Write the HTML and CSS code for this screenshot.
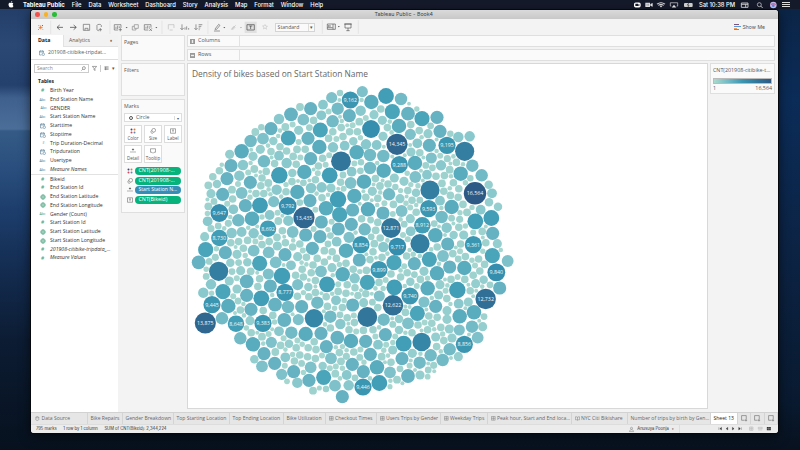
FILE: index.html
```
<!DOCTYPE html>
<html lang="en">
<head>
<meta charset="utf-8">
<title>Tableau Public - Book4</title>
<link rel="stylesheet" href="styles.css">
</head>
<body>
<svg class="defs" width="0" height="0">
  <defs>
    <symbol id="sheet" viewBox="0 0 12 12"><path d="M1 1h8v6M1 1v8h5M8.500 7v4M6.500 9h4"/></symbol>
    <symbol id="grid" viewBox="0 0 12 12"><path d="M1 1h9v9H1zM5.500 1v9M1 5.500h9"/></symbol>
    <symbol id="book" viewBox="0 0 12 12"><path d="M1 2h3l2 1 2-1h3v7H8l-2 1-2-1H1zM6 3v7"/></symbol>
    <symbol id="cyl" viewBox="0 0 12 12"><path d="M2 3c0-2 7-2 7 0v6c0 2-7 2-7 0zM2 3c0 1.600 7 1.600 7 0"/></symbol>
    <symbol id="cal" viewBox="0 0 12 12"><path d="M1 2h8v3M1 2v8h4M1 4h8M3 1v2M7 1v2"/><circle cx="8.500" cy="8.500" r="2.500"/></symbol>
    <symbol id="globe" viewBox="0 0 12 12"><circle cx="6" cy="6" r="4.500"/><path d="M1.500 6h9M6 1.500c-3 3-3 6 0 9c3-3 3-6 0-9"/></symbol>
    <symbol id="dots" viewBox="0 0 12 12"><g stroke="none"><circle cx="3" cy="3" r="2" fill="#48427a"/><circle cx="9" cy="3" r="2" fill="#e8762c"/><circle cx="3" cy="9" r="2" fill="#d6455a"/><circle cx="9" cy="9" r="2" fill="#5b89b4"/></g></symbol>
    <symbol id="size" viewBox="0 0 12 12"><circle cx="7.500" cy="4.500" r="3.700"/><path d="M4 5a2.800 2.800 0 1 0 3 4"/></symbol>
    <symbol id="label" viewBox="0 0 12 12"><path d="M1 1.500h10v9H1zM4 4h4M6 4v4.500"/></symbol>
    <symbol id="detail" viewBox="0 0 12 12"><circle cx="6" cy="3" r="1.300" fill="#444"/><circle cx="2" cy="8" r=".6"/><circle cx="6" cy="8" r=".6"/><circle cx="10" cy="8" r=".6"/></symbol>
    <symbol id="tip" viewBox="0 0 12 12"><path d="M1 1.500h10v7H8l-2 2-2-2H1z"/></symbol>
  </defs>
</svg>
<header class="menubar">
  <svg class="apple" viewBox="0 0 12 14"><path d="M6 4C4 2.500 1 3.500 1 7s2.500 7 5 5.700C8.500 14 10 12 11 10 9 9 9 6 10.700 5 9.500 3.200 7.500 3.200 6 4zM6 3c0-1.800 1-2.800 2.500-3C8.500 1.800 7.500 2.900 6 3z"/></svg>
  <nav><b>Tableau Public</b><span>File</span><span>Data</span><span>Worksheet</span><span>Dashboard</span><span>Story</span><span>Analysis</span><span>Map</span><span>Format</span><span>Window</span><span>Help</span></nav>
  <div class="tray">
    <svg viewBox="0 0 180 16">
      <rect x="0" y="1" width="20" height="15" rx="5" fill="#fff"/><path d="M4 5h8v7H4zM12 8l4-2v6l-4-2" fill="#151a2b"/>
      <path d="M34 2h14v13H34zM49 6l7-3v11l-7-3z" fill="#ddd"/><path d="M39 5v6M43 5v6" stroke="#151a2b"/>
      <path d="M68 5q13-9 26 0l-2 2q-11-7-22 0zM72 9q9-6 18 0l-2 2q-7-5-14 0zM77 12q4-3 8 0l-4 4z" fill="#ddd"/>
      <path d="M112 12h-3V2h22v10h-3" stroke="#ddd" stroke-width="2" fill="none"/><path d="M113 16l7-8 7 8z" fill="#ddd"/>
      <rect x="150" y="3" width="26" height="12" rx="3" fill="#ccc"/><path d="M164 3l-4 6h5l-3 6" stroke="#222" stroke-width="2" fill="none"/>
    </svg>
    <b>Sat 10:38 PM</b>
    <svg class="tray-end" viewBox="0 0 126 18">
      <path d="M1 3h20v13H1zM1 7h20M14 7v9" stroke="#ddd" stroke-width="2.500" fill="none"/>
      <circle cx="55" cy="8" r="6" stroke="#ddd" stroke-width="2" fill="none"/><path d="M59 12l6 6" stroke="#ddd" stroke-width="2.500"/>
      <circle cx="97" cy="9" r="10" fill="#c5b6e7"/><path d="M90 8q7-6 14 0" stroke="#ef5c86" stroke-width="4" fill="none"/><circle cx="97" cy="11" r="4" fill="#4c8be0"/>
    </svg>
    <i class="list"></i>
  </div>
</header>

<main class="window">
  <div class="titlebar"><i class="red"></i><i class="amber"></i><i class="green"></i><span>Tableau Public - Book4</span></div>
  <div class="toolbar">
    <svg viewBox="0 0 340 50">
      <g fill="none" stroke="#666" stroke-width="2">
        <path d="M59 5v40M69 0M394 5" stroke="#dcdcdc"/><path d="M237 5v40" stroke="#dcdcdc"/>
        <g stroke-width="2.500"><path d="M29 19v12M23 25h12" stroke="#e8762c"/><path d="M22 18l3 3M33 29l3 3" stroke="#7099a5"/><path d="M36 18l-3 3M25 29l-3 3" stroke="#c72035"/></g>
        <path d="M96 25H79M86 18l-8 7 8 7M117 25h18M128 18l8 7-8 7" stroke="#333"/>
        <path d="M157 16h19v18h-19zM162 34v-6h9v6M198 19c0-4 13-4 13 0v5M198 19v13c0 2 4 3 6 3M208 27v10M203 32h10"/>
        <path d="M250 17h20v10M250 17v16h11M255 30v-7M260 30V20M265 27v-5M268 27v10M263 32h10"/>
        <path d="M310 17h12v11h-12zM304 22h6M304 22v11h11v-5" stroke="#888"/>
      </g>
      <path d="M284 24h6l-3 4z" fill="#555"/>
    </svg>
    <svg viewBox="340 0 340 50">
      <g fill="none" stroke="#666" stroke-width="2">
        <path d="M394 5v40M532 5v40" stroke="#dcdcdc"/>
        <path d="M341 17h20v9M341 17v16h12M346 29v-6M351 29V20M356 26v-4M356 28l8 8M364 28l-8 8"/>
        <path d="M413 31v-14h17v10M417 33h9" stroke="#bbb"/>
        <path d="M454 16v16M449 27l5 5 5-5M463 32v-7M468 32v-10M474 32v-5" />
        <path d="M496 16v16M491 27l5 5 5-5M504 17h11M504 22h8M504 27h5M504 32h3"/>
        <path d="M554 29l10-13 4 3-10 12h-5zM550 36h18"/>
        <path d="M602 32l13-13M605 33l9-9M603 29l8-8" stroke="#bbb"/>
        <rect x="642" y="8" width="36" height="34" fill="#e0e0e0" stroke="none"/><path d="M649 17h22v16h-22zM656 21h9M660 21v9" stroke="#444"/>
      </g>
      <path d="M374 24h6l-3 4zM578 24h6l-3 4z" fill="#555"/><path d="M628 24h6l-3 4z" fill="#aaa"/>
    </svg>
    <svg class="pin" viewBox="0 0 12 12"><path d="M6 1l1.500 3 3.500.5-3 2 1 4-3-2.500L3 10l1-4-3-2 3.500-.5z" fill="none" stroke="#bbb"/></svg>
    <div class="select">Standard<i>▾</i></div>
    <svg class="show" viewBox="0 0 90 30"><g fill="none" stroke="#555" stroke-width="2"><path d="M-14-5v40M94-5v40" stroke="#dcdcdc"/><path d="M1 6h24v16H1zM1 17h16M5 9v6M9 9v6M18 6v16M54 6h18v12H54zM63 18v8M58 26h10M51 6h24"/></g><path d="M33 13h5l-2.500 3z"/></svg>
    <div class="showme"><i></i><span>Show Me</span></div>
  </div>

  <div class="work">
    <aside class="data">
      <div class="datatabs"><b>Data</b><span>Analytics</span><i>♦</i></div>
      <div class="source"><svg><use href="#cal"/></svg><span>201908-citibike-tripdat...</span></div>
      <div class="searchrow"><div class="search"><span>Search</span><svg viewBox="0 0 12 12"><circle cx="7" cy="5" r="3.500"/><path d="M4.500 7.500L1 11"/></svg></div><svg viewBox="0 0 12 12"><path d="M1 1h10L7 6v5L5 9V6z"/></svg><em></em><svg viewBox="0 0 12 12"><path d="M1 2h10M1 5h10M1 8h10M4 2v8"/></svg><small>▾</small></div>
      <h2>Tables</h2>
      <ul id="fields"></ul>
    </aside>

    <section class="cards">
      <div class="card pages">Pages</div>
      <div class="card filters">Filters</div>
      <div class="card marks">Marks
        <div class="marktype"><i></i><span>Circle</span><small>▾</small></div>
        <div class="buttons">
          <div><svg><use href="#dots"/></svg>Color</div><div><svg><use href="#size"/></svg>Size</div><div><svg><use href="#label"/></svg>Label</div>
          <div><svg><use href="#detail"/></svg>Detail</div><div><svg><use href="#tip"/></svg>Tooltip</div>
        </div>
        <div class="pill"><svg><use href="#dots"/></svg><span>CNT(201908-...</span></div>
        <div class="pill"><svg><use href="#size"/></svg><span>CNT(201908-...</span></div>
        <div class="pill blue"><svg><use href="#detail"/></svg><span>Start Station N...</span></div>
        <div class="pill"><svg><use href="#label"/></svg><span>CNT(Bikeid)</span></div>
      </div>
    </section>

    <section class="sheet">
      <div class="shelf"><span><i class="cols"></i>Columns</span></div>
      <div class="shelf"><span><i class="rows"></i>Rows</span></div>
      <div class="canvas">
        <div class="view"><h1>Density of bikes based on Start Station Name</h1><svg id="chart" viewBox="188 82 519 326"></svg></div>
        <div class="legend"><span>CNT(201908-citibike-t...</span><div class="ramp"></div><p><span>1</span><span>16,564</span></p></div>
      </div>
    </section>
  </div>

  <div class="tabs">
    <span class="t0"><svg><use href="#cyl"/></svg>Data Source</span><span class="t1">Bike Repairs</span><span class="t2">Gender Breakdown</span><span class="t3">Top Starting Location</span><span class="t4">Top Ending Location</span><span class="t5">Bike Utilization</span><span class="t6"><svg><use href="#grid"/></svg>Checkout Times</span><span class="t7"><svg><use href="#grid"/></svg>Users Trips by Gender</span><span class="t8"><svg><use href="#grid"/></svg>Weekday Trips</span><span class="t9"><svg><use href="#grid"/></svg>Peak hour, Start and End loca...</span><span class="t10"><svg><use href="#book"/></svg>NYC Citi Bikishare</span><span class="t11">Number of trips by birth by Gen...</span><span class="t12">Sheet 13</span><span class="add"><svg><use href="#sheet"/></svg></span><span class="add"><svg><use href="#sheet"/></svg></span><span class="add"><svg><use href="#sheet"/></svg></span>
  </div>
  <footer class="status">
    <span>795 marks</span><span>1 row by 1 column</span><span>SUM of CNT(Bikeid): 2,344,224</span>
    <div class="user"><svg viewBox="0 0 12 12"><circle cx="6" cy="3" r="2.500"/><path d="M1 11c0-6 10-6 10 0z"/></svg><span>Anusuya Poonja</span><small>▾</small></div>
    <div class="pager"><svg viewBox="0 0 160 16"><path d="M1 4v8M9 4l-5 4 5 4zM28 4l-5 4 5 4zM42 4l5 4-5 4zM61 4l5 4-5 4zM69 4v8" fill="#333" stroke="#333"/><path d="M94 3h10v10H94zM99 3v10M94 8h10M120 4h12v4h-12zM120 12h12" fill="none" stroke="#bbb" stroke-width="2"/><path d="M146 3h12v10h-12z" fill="#333"/><path d="M152 3v10M146 8h12" stroke="#ccc"/></svg></div>
  </footer>
</main>
<script src="chart.js"></script>
</body>
</html>
```
FILE: styles.css
```
* { box-sizing: border-box; }
body {
  margin: 0; width: 800px; height: 450px; overflow: hidden;
  font: 5.4px/1 "Open Sans", "Noto Sans", sans-serif; color: #555;
  background:
    linear-gradient(#0b2445 0, #0b2c58 100px, #0c2344 250px, #091a30 400px, #08111e 450px) 100% 0 / 400px 450px no-repeat,
    linear-gradient(#213c66 0, #2b4875 45px, #24406c 85px, #3f608d 98px, #4b6e99 129px, #345a85 131px, #2b507f 165px, #1d3e6c 210px, #142d52 265px, #0c1c33 340px, #07111e 450px);
}
svg { display: block; flex: none; overflow: visible; }
.defs { position: absolute; }
i, em { font-style: normal; }
.menubar {
  height: 9px; display: flex; align-items: center; background: #151a2b; color: #fff;
  font: 500 5.850px/9px Inter, sans-serif; white-space: nowrap;
}
.apple { width: 6px; height: 7px; margin-left: 8px; fill: #fff; }
.menubar nav { display: flex; gap: 6.900px; margin-left: 9px; }
.menubar b { font-weight: 700; }
.tray { margin-left: auto; display: flex; align-items: center; width: 166px; }
.tray svg { width: 60px; height: 5.500px; margin-right: 5px; }
.tray b { font-weight: 500; width: 37px; margin-right: 5px; letter-spacing: -.05px; }
.tray .tray-end { width: 42px; margin-right: -1px; height: 6px; }
.list { width: 8px; height: 5px; border: solid #ddd; border-width: 1px 0; background: linear-gradient(#ddd, #ddd) 0 50% / 8px 1px no-repeat; }
.window {
  margin: 1px 0 0 31px; width: 747px; height: 423px; display: flex; flex-direction: column;
  background: #f3f3f3; border-radius: 3px; overflow: hidden; box-shadow: 0 0 0 1px #05080d, 0 3px 12px #000a;
}
.titlebar { flex: none; height: 9px; background: linear-gradient(#dadada, #c8c8c8); display: flex; align-items: center; gap: 4px; padding-left: 4px; }
.titlebar i { width: 4.500px; height: 4.500px; border-radius: 50%; background: #f4514d; }
.titlebar .amber { background: #f8b025; }
.titlebar .green { background: #2abb38; }
.titlebar span { margin-left: 314px; font: 5.350px/9px Inter, sans-serif; color: #444; white-space: nowrap; }
.toolbar { flex: none; height: 16px; display: flex; align-items: center; }
.toolbar > svg { width: 113.300px; height: 16.700px; }
.toolbar > .pin { width: 6px; height: 6px; margin-left: 4px; }
.select { width: 40px; height: 9px; margin-left: 7px; border: 1px solid #d4d4d4; background: #fafafa; padding-left: 2px; display: flex; justify-content: space-between; line-height: 7px; font-size: 5.100px; }
.select i { width: 6px; border-left: 1px solid #ddd; text-align: center; }
.toolbar > .show { width: 30px; height: 10px; margin-left: 12px; }
.showme { margin-left: auto; margin-right: 13px; display: flex; align-items: center; gap: 2px; font: 5.100px Inter, sans-serif; }
.showme i { width: 7px; height: 6px; background:
  linear-gradient(#775480, #775480) 0 0 / 5px 1px no-repeat,
  linear-gradient(#5b9bd5, #5b9bd5) 0 2px / 7px 1px no-repeat,
  linear-gradient(#f59b55, #f59b55) 0 4px / 3px 1px no-repeat,
  linear-gradient(#e56262, #e56262) 0 5px / 5px 1px no-repeat; }
.work { flex: none; height: 377px; display: flex; }
.data { width: 87px; background: #fff; }
.datatabs { display: flex; height: 12px; line-height: 11px; }
.datatabs b { width: 32px; padding-left: 7px; color: #222; font-size: 5.200px; }
.datatabs span { flex: 1; padding-left: 5px; background: #f2f2f2; border: solid #e2e2e2; border-width: 0 0 1px 1px; font-size: 5.100px; }
.datatabs i { width: 8px; background: #f2f2f2; border-bottom: 1px solid #e2e2e2; font-size: 4px; }
.source { height: 13px; display: flex; align-items: center; gap: 3px; padding-left: 8px; border-bottom: 1px solid #ddd; font-size: 5.150px; white-space: nowrap; }
.source svg, .data li svg { width: 6px; height: 6px; fill: none; stroke: #587f98; stroke-width: 1.200; }
.searchrow { display: flex; align-items: center; gap: 3px; padding: 4px 0 0 3px; }
.search { width: 55px; height: 9px; border: 1px solid #ccc; display: flex; align-items: center; justify-content: space-between; padding: 0 2px; color: #888; font-size: 5px; }
.searchrow svg { width: 5px; height: 5px; fill: none; stroke: #555; stroke-width: 1.300; }
.searchrow em { width: 1px; height: 7px; background: #ccc; }
h2 { margin: 5px 0 2.300px 7px; font-size: 5px; line-height: 6px; color: #222; }
.data ul { list-style: none; margin: 0; padding: 0; }
.data li { height: 8.770px; display: flex; align-items: center; gap: 4px; padding-left: 8px; color: #333; font-size: 5.150px; white-space: nowrap; }
.data li b { width: 9px; margin-left: -1px; margin-right: -1px; text-align: center; font-size: 3.600px; font-weight: 400; color: #407f9e; }
.data li svg { margin-right: .5px; margin-left: .5px; }
.data li.g svg { stroke: #3b9c75; }
.data li.g b, .data li.g b.hash { color: #3b9c75; }
.data .hash { font-size: 5px; }
.data .measure { border-top: 1px solid #e2e2e2; height: 9.600px; }
.data em { font-style: italic; }
.cards { width: 66px; padding: 0 0 0 3px; }
.card { width: 64px; border: 1px solid #dfdfdf; background: #fafafa; padding: 4px 2px 0; font-size: 5.200px; }
.pages { height: 26px; }
.filters { height: 33px; margin-top: 2px; padding-top: 4px; }
.marks { height: 114px; margin-top: 3px; }
.marktype { height: 9px; margin-top: 4px; border: 1px solid #ddd; background: #fff; display: flex; align-items: center; gap: 3px; padding-left: 4px; }
.marktype i { width: 4px; height: 4px; border: .5px solid #555; border-radius: 50%; }
.marktype small { margin-left: auto; border-left: 1px solid #ddd; width: 7px; text-align: center; }
.buttons { display: grid; grid-template-columns: repeat(3, 18px); grid-auto-rows: 18px; gap: 2px; margin: 3px 0 4px; }
.buttons div { border: 1px solid #ddd; background: #fff; display: flex; flex-direction: column; align-items: center; gap: 1.500px; padding-top: 2px; font-size: 4.500px; }
.buttons svg, .pill svg { width: 6px; height: 6px; fill: none; stroke: #555; }
.pill { display: flex; align-items: center; gap: 2px; height: 8px; margin: 0 0 1.600px 3px; }
.pill span { width: 46px; height: 8px; border-radius: 4px; background: #07b37b; color: #fff; padding-left: 3.500px; line-height: 7.500px; font-size: 5.350px; white-space: nowrap; }
.pill.blue span { background: #368eb6; font-size: 5.100px; }
.sheet { width: 594px; padding: 0 3px; }
.shelf { height: 12px; margin-bottom: 2px; border: 1px solid #dfdfdf; background: #fafafa; width: 588px; }
.shelf span { display: flex; align-items: center; gap: 3px; width: 52px; height: 10px; padding-left: 2px; border-right: 1px solid #e2e2e2; }
.shelf i { width: 5px; height: 5px; border: 1px solid #999; background: repeating-linear-gradient(90deg, #aaa 0 1px, #eee 0 2px); }
.shelf i.rows { background: repeating-linear-gradient(#aaa 0 1px, #eee 0 2px); }
.canvas { display: flex; gap: 2px; align-items: flex-start; }
.view { width: 521px; height: 346px; background: #fff; border: 1px solid #d8d8d8; }
h1 { margin: 0; padding: 0 0 0 4px; height: 18px; line-height: 20px; font-weight: 400; font-size: 8.400px; color: #666; white-space: nowrap; }
#chart { width: 519px; height: 326px; }
#chart text { fill: #eef6f8; font-size: 5.300px; text-anchor: middle; }
.legend { width: 65px; height: 31px; border: 1px solid #dfdfdf; background: #fafafa; padding: 4px 2px; white-space: nowrap; font-size: 5.350px; overflow: hidden; }
.ramp { height: 6px; margin-top: 5px; background: linear-gradient(90deg, #a9dacd, #72bac6, #3b96b2, #32779b, #2c5985); border: .5px solid #bbb; }
.legend p { margin: 2px 0 0; display: flex; justify-content: space-between; }
.tabs { flex: none; height: 12px; display: flex; background: #e6e6e6; border-top: 1px solid #d2d2d2; font-size: 5.050px; line-height: 11px; white-space: nowrap; color: #666; }
.tabs span { display: flex; align-items: center; gap: 1.500px; padding-left: 2.500px; border-right: 1px solid #d4d4d4; flex: none; }
.tabs svg { width: 5px; height: 5px; fill: none; stroke: #666; }
.tabs .t0 { width: 57px; padding-left: 4px; } .t1 { width: 35px; } .t2 { width: 51px; } .t3 { width: 56px; } .t4 { width: 54px; } .t5 { width: 42px; } .t6 { width: 51px; } .t7 { width: 64px; } .t8 { width: 47px; } .t9 { width: 84px; } .t10 { width: 56px; } .t11 { width: 83px; }
.tabs .t12 { width: 27px; background: #fff; color: #222; }
.tabs .add { width: 13.300px; padding-left: 3px; }
.tabs .add svg { width: 7px; height: 7px; }
.status { flex: none; height: 9px; display: flex; align-items: center; background: #ececec; border-top: 1px solid #ddd; padding-left: 5px; gap: 6.700px; font: 4.150px/8px Inter, sans-serif; color: #333; white-space: nowrap; }
.user { margin-left: auto; width: 51px; display: flex; align-items: center; gap: 3px; border-right: 1px solid #ddd; }
.user svg { width: 5px; height: 5px; fill: none; stroke: #666; }
.pager { width: 58px; margin-left: 31px; margin-right: 2px; }
.pager svg { width: 54px; height: 5.300px; }
```
FILE: chart.js
```
const NS = "http://www.w3.org/2000/svg";

// Field list: [icon, name, role]
const fields = [
  ["#", "Birth Year", "g"], ["Abc", "End Station Name"], ["=Abc", "GENDER"], ["Abc", "Start Station Name"],
  ["cal", "Starttime"], ["cal", "Stoptime"], ["=#", "Trip Duration-Decimal"], ["cal", "Tripduration"],
  ["Abc", "Usertype"], ["Abc", "Measure Names", "i"], ["#", "Bikeid", "g m"], ["#", "End Station Id", "g"],
  ["globe", "End Station Latitude", "g"], ["globe", "End Station Longitude", "g"], ["Abc", "Gender (Count)", "g"],
  ["#", "Start Station Id", "g"], ["globe", "Start Station Latitude", "g"], ["globe", "Start Station Longitude", "g"],
  ["#", "201908-citibike-tripdata_...", "g i"], ["#", "Measure Values", "g i"]
];
document.getElementById("fields").innerHTML = fields.map(([icon, name, role = ""]) => {
  const mark = icon === "cal" || icon === "globe" ? `<svg><use href="#${icon}"/></svg>` : `<b class="${icon === "#" ? "hash" : ""}">${icon}</b>`;
  const label = role.includes("i") ? `<em>${name}</em>` : `<span>${name}</span>`;
  return `<li class="${role.replace("m", "measure")}">${mark}${label}</li>`;
}).join("");

// Station bubbles by quadrant, in thirds of a pixel: x y r [label]
const quadrants = [
  { x: 188, y: 64, d: "487 108 26 9,162;431 101 17;456 87 10;368 134 20;405 122 15;336 129 12;309 151 21;273 165 16;346 167 18;400 154 15;449 134 19;484 155 20;434 172 19;397 198 23;249 194 20;301 222 23;292 189 12;332 199 14;360 223 20;202 204 12;220 190 10;188 231 19;225 224 18;256 231 13;161 262 22;394 249 22;435 250 16;470 245 15;217 256 14;195 277 14;273 275 15;228 292 19;125 271 14;129 305 20;165 303 16;368 284 20;327 256 12;296 297 16;459 292 30;274 334 25;349 324 22;313 327 13;425 334 24;491 323 15;117 344 20;154 335 16;187 355 20;199 315 12;61 364 12;87 360 13;104 391 20;69 389 14;132 377 12;161 387 18;266 377 16;328 384 22;369 372 16;401 370 16;366 410 20;450 406 25;488 357 18;216 424 24;257 413 17;172 425 20;136 436 15;94 447 27 9,647;61 427 12;299 426 27 9,792;348 461 32 13,435;414 433 22;455 452 23;494 438 20;192 464 22;151 469 19;245 453 15;400 474 20;301 470 16;240 494 25 8,692;59 472 15;451 495 20;490 481 20;271 471 12;121 478 11;69 494 11;241 357 12;429 372 14" },
  { x: 350, y: 64, d: "37 83 17;64 114 22;108 96 24;153 105 19;32 140 16;72 152 14;127 143 23;174 149 21;216 164 23;261 160 20;97 169 14;147 186 22;63 195 27;28 173 12;270 202 20;181 211 17;234 209 14;99 217 14;325 219 16;359 217 16;301 209 10;141 241 32 14,345;202 238 15;238 244 20;291 244 26 9,195;344 262 29;48 241 16;80 243 15;10 232 13;20 265 22;60 273 19;100 276 19;183 264 14;148 302 26 9,288;195 297 22;244 282 17;273 304 16;292 284 11;101 320 22;60 312 19;33 295 10;367 305 19;395 334 19;332 329 22;299 317 12;231 332 15;196 339 18;133 342 14;162 352 14;42 353 22;67 382 14;117 391 19;240 378 29;375 388 34 16,564;416 362 13;426 388 15;417 415 13;444 428 13;361 343 10;198 386 13;150 404 14;13 396 22;54 436 22;99 447 20;155 441 18;236 434 26 9,593;270 410 15;305 429 22;392 437 15;424 462 24;376 472 24;351 445 12;275 459 19;217 484 25 8,912;181 464 14;123 492 30 12,871;44 496 19;182 502 15;77 499 12;256 514 22;290 491 16;428 508 20;329 466 11;90 366 12;136 369 10;177 119 6" },
  { x: 188, y: 230, d: "94 24 25 8,730;50 20 14;53 59 23;32 97 21;112 68 20;82 82 11;131 9 16;161 6 15;197 10 16;314 6 18;353 15 20;396 20 20;197 62 18;242 67 18;291 74 20;268 48 14;147 73 14;92 124 29;127 98 13;215 100 23;263 97 18;309 106 15;329 80 14;373 55 20;178 97 13;241 132 17;282 138 25;158 122 14;188 124 12;176 154 21;124 153 14;69 163 16;46 188 16;105 185 23;147 177 14;247 168 20;291 187 26 8,777;329 164 17;361 171 13;399 124 18;464 133 22;432 113 14;417 163 24;474 62 22;446 35 15;483 22 17;409 62 12;176 196 20;220 205 24;189 238 20;72 224 26 9,445;121 228 22;52 279 32 13,875;102 265 19;144 281 25 8,648;225 280 26 9,383;261 224 21;300 231 19;341 230 20;388 218 19;444 211 15;494 225 20;186 272 14;289 270 21;331 269 17;378 265 28;427 260 19;457 282 16;157 325 19;195 343 22;273 304 15;310 308 19;353 312 22;399 310 20;448 323 21;489 333 22;250 337 17;415 350 20;222 320 12;199 388 13;228 371 20;260 400 20;262 366 12;222 409 18;292 382 15;303 341 13;281 433 17;317 425 20;328 458 16;297 454 9;363 451 20;407 442 23;368 412 18;429 385 18;493 403 20;442 431 12;476 435 15;475 379 11;441 467 18;482 466 16;463 500 20;375 482 12;394 474 8;414 477 10;404 408 13;459 394 12" },
  { x: 350, y: 230, d: "33 44 26 8,854;142 50 27 9,717;210 41 29;293 42 20;311 15 13;341 15 14;370 44 26 9,361;442 41 14;427 77 23;473 93 18;439 127 27 9,840;28 90 20;73 41 12;100 51 16;132 98 23;87 119 26 9,899;193 101 20;238 88 23;279 78 18;299 111 20;343 114 22;261 130 22;222 124 14;14 145 16;52 157 23;133 172 24;180 198 26 9,740;181 155 13;233 175 22;88 198 17;322 180 25;407 207 31 12,732;449 174 20;377 161 14;401 149 13;270 164 14;266 195 14;41 218 14;129 226 31 12,622;222 216 17;257 229 20;52 261 30;101 269 19;202 250 23;174 280 18;147 267 13;372 247 22;329 259 22;291 242 14;291 268 14;326 221 15;355 216 14;366 290 19;328 300 17;298 297 14;398 290 14;383 323 18;343 343 26 8,856;325 380 14;47 334 20;106 314 20;84 344 15;161 341 24;215 336 28;257 321 14;306 324 14;299 358 19;278 390 19;242 376 19;209 398 19;251 406 11;174 438 21;210 435 14;233 440 9;156 386 20;187 370 14;128 360 14;61 373 20;81 412 22;120 427 18;40 425 20;88 459 24;39 471 26 9,446;95 380 12;147 300 13;120 470 8;141 449 12" }
];
const bubbles = quadrants.flatMap(q => q.d.split(";").map(s => {
  const [x, y, r, label] = s.split(" ");
  return { x: q.x + x / 3, y: q.y + y / 3, r: r / 3, label };
}));

// Low-count stations are packed into the gaps between the large ones.
const edge = [[207,184],[230,153],[255,131],[279,118],[300,107],[332,99],[362,92],[386,97],[408,105],[437,118],[455,134],[470,140],[472,167],[484,177],[492,204],[493,230],[501,250],[496,270],[486,310],[479,334],[458,353],[428,376],[390,387],[363,383],[342,393],[320,388],[287,381],[255,358],[232,325],[208,300],[206,280],[206,250],[207,222]];
const inside = (x, y) => {
  let hit = false;
  for (let i = 0, j = edge.length - 1; i < edge.length; j = i++) {
    const [ax, ay] = edge[i], [bx, by] = edge[j];
    if ((ay > y) !== (by > y) && x < (bx - ax) * (y - ay) / (by - ay) + ax) hit = !hit;
  }
  return hit;
};
let seed = 11;
const random = () => (seed = (seed * 16807) % 2147483647) / 2147483647;
let spots = [];
for (let x = 190; x < 515; x += 0.6) for (let y = 85; y < 405; y += 0.6) if (inside(x, y)) spots.push([random(), x, y]);
spots.sort((a, b) => a[0] - b[0]);
const gap = (x, y) => {
  let g = 99;
  for (const b of bubbles) g = Math.min(g, Math.hypot(b.x - x, b.y - y) - b.r);
  return g;
};
spots = spots.filter(s => gap(s[1], s[2]) > 1.7);
for (const r of [3.9, 3.5, 3.1, 2.8, 2.4, 2.1]) {
  for (const [, x, y] of spots) {
    const g = gap(x, y);
    if (g >= r && g < r + 0.45) bubbles.push({ x, y, r });
  }
}

const ramp = ["b0ddd3","a5d7d0","9dd2cf","95cecf","89c8cc","7ec1ca","72bac6","66b2c2","59acbe","4ba5ba","419eb6","3b96b2","358ead","3586a7","347ea1","32779b","316f96","2f6790","2d608a","2c5985"];
const chart = document.getElementById("chart");
const add = (tag, attrs, text) => {
  const el = document.createElementNS(NS, tag);
  for (const k in attrs) el.setAttribute(k, attrs[k]);
  if (text) el.textContent = text;
  chart.append(el);
};
for (const b of bubbles) {
  const t = Math.min(1, (b.r / 11.3) ** 2);
  add("circle", { cx: b.x, cy: b.y, r: b.r - 0.1, fill: "#" + ramp[Math.round(t * 19)] });
}
for (const b of bubbles) if (b.label) add("text", { x: b.x, y: b.y + 1.9 }, b.label);
```
